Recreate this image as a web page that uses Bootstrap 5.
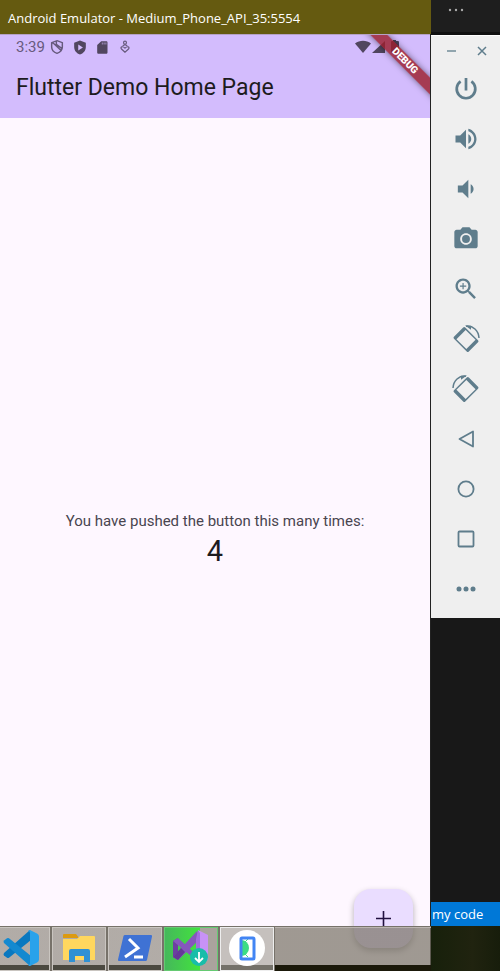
<!DOCTYPE html>
<html lang="en">
<head>
<meta charset="utf-8">
<meta name="viewport" content="width=device-width, initial-scale=1">
<title>Android Emulator</title>
<link href="https://cdn.jsdelivr.net/npm/bootstrap@5.3.0/dist/css/bootstrap.min.css" rel="stylesheet">
<style>
body { background: #181818; font-family: Roboto, "Open Sans", sans-serif; }
svg { display: block; }
.desktop { min-height: 100vh; overflow: hidden; }
.title-strip { height: 34px; background: #655a10; color: #fff; font: 13px "Open Sans", sans-serif; padding-top: 2px; }
.phone { background: #fef7ff; border-right: 1px solid #222; }
.app-top { background: #d3bcfd; height: 84px; border-top: 1px solid #b5a1c5; overflow: hidden; }
.status { height: 24px; font-size: 15px; color: #675a7d; padding: 0 30px 0 16px; }
.status svg { fill: #51465f; }
.app-title { font-size: 23px; line-height: 28px; font-weight: 400; color: #1d1b20; margin-top: 15px; }
.ribbon { top: 20px; right: -25px; width: 100px; height: 12px; transform: rotate(45deg); background: rgba(155, 30, 45, .82); color: #fff; font-size: 10px; line-height: 12px; font-weight: 900; box-shadow: 0 0 6px rgba(0, 0, 0, .5); }
.push-label { font-size: 15px; line-height: 20px; color: #49454f; }
.push-count { font-size: 29px; line-height: 40px; color: #1d1b20; }
.counter { padding-bottom: 8px; }
.fab { right: 17px; bottom: 23px; width: 59px; height: 59px; border: 0; border-radius: 17px; background: #eaddff; box-shadow: 0 3px 6px rgba(0, 0, 0, .3); }
.side { width: 69px; }
.side-top { height: 35px; background: #1e1e1e; border-bottom: 3px solid #101010; }
.tools { background: #efefef; border-top: 1px solid #fff; padding-bottom: 4px; color: #5f7d8c; }
.tools button { border: 0; background: none; padding: 0; color: inherit; }
.tool-btn { height: 50px; }
.win-row { height: 30px; margin-bottom: -2px; padding: 0 13px 0 16px; }
.blue-strip { height: 24px; background: #0078d7; color: #fff; font: 13px "Open Sans", sans-serif; padding-left: 1px; }
.ground { height: 45px; background: linear-gradient(90deg, #17200b, #20230f 60%, #171d0b); }
.taskbar { height: 45px; border-top: 1px solid #77726a; background: linear-gradient(rgba(119, 113, 100, .7) 38px, #1b190a 38px); box-shadow: inset 0 1px #bbb5b0; }
.task-list { gap: 2px; }
.task { width: 54px; height: 44px; padding: 0 0 2px; border: 1px solid #c9c5c0; background: linear-gradient(rgba(205, 200, 198, .4) 37px, #4b4940 37px); box-shadow: 0 0 0 1px #77726a; }
.task:first-child { width: 51px; margin-left: -1px; padding-right: 8px; }
.task.vs { border-color: #65ca72; background: linear-gradient(90deg, #45b85b, #42e43d 68%, transparent 68%), #aaa39d; }
.task.on { border-color: #eee; background: linear-gradient(#c5c0bd 37px, #747169 37px); }
</style>
<script src="https://cdn.jsdelivr.net/npm/bootstrap@5.3.0/dist/js/bootstrap.bundle.min.js"></script>
</head>
<body>
<div class="desktop d-flex position-relative">
  <main class="d-flex flex-column flex-grow-1">
    <header class="title-strip d-flex align-items-center px-2 text-nowrap">Android Emulator - Medium_Phone_API_35:5554</header>
    <section class="phone d-flex flex-column flex-grow-1 position-relative">
      <div class="app-top position-relative">
        <div class="status d-flex align-items-center">
          <span>3:39</span>
          <svg class="ms-1" width="16" height="16" viewBox="0 0 24 24" style="fill:none" stroke="#675a7d" stroke-width="2.2"><path d="M12 2.500 20 5.500V12c0 4.500-3.500 8-8 9.500C7.500 20 4 16.500 4 12V5.500zM5 5l14 13M11 3v5l8 6"/></svg>
          <svg class="ms-2" width="14" height="15" viewBox="0 0 24 24"><path fill-rule="evenodd" d="M12 0 22 4V11c0 6-4.200 11-10 13C6.200 22 2 17 2 11V4zM9 7v10l8-5z"/></svg>
          <svg class="ms-2" width="15" height="15" viewBox="0 0 24 24"><path fill-rule="evenodd" d="M18 2h-8L3.500 8v12c0 1.100.9 2 2 2H18c1.100 0 2-.9 2-2V4c0-1.100-.9-2-2-2zm-6 5h-1V4h1zm3 0h-1V4h1zm3 0h-1V4h1z"/></svg>
          <svg class="ms-2" width="14" height="14" viewBox="0 0 24 24" style="fill:none" stroke="#675a7d" stroke-width="2"><circle cx="12" cy="4.500" r="2.500"/><path d="M12 21 6 15.500C3 12 8 9.500 12 14c4-4.500 9-2 6 1.500zM8 10l4-2 4 2"/></svg>
          <svg class="ms-auto" width="16" height="14" viewBox="0 0 16 14"><path d="M0 3.500C4.500-.2 11.500-.2 16 3.500L8 13z"/></svg>
          <svg class="ms-0" width="15" height="14" viewBox="0 0 15 14"><path d="M14 1v12H1z"/></svg>
          <svg class="ms-1" width="10" height="14" viewBox="0 0 10 14"><path d="M3 0h3v1h2q1 0 1 1v10q0 1-1 1H2q-1 0-1-1V2q0-1 1-1h1z"/></svg>
        </div>
        <h1 class="app-title mb-0 px-3 text-nowrap">Flutter Demo Home Page</h1>
        <span class="ribbon position-absolute text-center">DEBUG</span>
      </div>
      <div class="counter flex-grow-1 d-flex flex-column align-items-center justify-content-center">
        <p class="push-label mb-0">You have pushed the button this many times:</p>
        <output class="push-count">4</output>
      </div>
      <button class="fab position-absolute d-flex align-items-center justify-content-center p-0" type="button" aria-label="Increment">
        <svg width="15" height="15" viewBox="0 0 15 15" stroke="#21103f" stroke-width="1.600"><path d="M7.500 0v15M0 7.500h15"/></svg>
      </button>
    </section>
  </main>

  <aside class="side d-flex flex-column flex-shrink-0">
    <div class="side-top ps-3 pt-2"><svg width="17" height="4" viewBox="0 0 17 4" fill="#aaa"><circle cx="3" cy="2" r="1.200"/><circle cx="9" cy="2" r="1.200"/><circle cx="15" cy="2" r="1.200"/></svg></div>
    <div class="tools d-flex flex-column">
      <div class="win-row d-flex align-items-center justify-content-between">
        <button type="button" aria-label="Minimize"><svg width="9" height="10" viewBox="0 0 9 10" stroke="currentColor" stroke-width="1.300"><path d="M0 5h9"/></svg></button>
        <button type="button" aria-label="Close"><svg width="10" height="10" viewBox="0 0 10 10" stroke="currentColor" stroke-width="1.500"><path d="M1 1l8 8M9 1 1 9"/></svg></button>
      </div>
      <button class="tool-btn d-flex align-items-center justify-content-center" type="button" aria-label="Power"><svg width="28" height="28" viewBox="0 0 28 28" fill="none" stroke="currentColor" stroke-width="2.700"><path d="M14 3v12.500M8.600 6.400a9.300 9.300 0 1 0 10.800 0"/></svg></button>
      <button class="tool-btn d-flex align-items-center justify-content-center" type="button" aria-label="Volume up"><svg width="28" height="28" viewBox="0 0 24 24" fill="currentColor"><path d="M3 9v6h4l5 5V4L7 9H3zm13.500 3c0-1.770-1.020-3.290-2.500-4.030v8.050c1.480-.73 2.500-2.250 2.500-4.020zM14 3.230v2.060c2.890.86 5 3.540 5 6.710s-2.110 5.850-5 6.710v2.060c4.010-.91 7-4.490 7-8.770s-2.990-7.860-7-8.770z"/></svg></button>
      <button class="tool-btn d-flex align-items-center justify-content-center" type="button" aria-label="Volume down"><svg width="28" height="28" viewBox="0 0 24 24" fill="currentColor"><path d="M18.500 12c0-1.770-1.020-3.290-2.500-4.030v8.050c1.480-.73 2.500-2.250 2.500-4.020zM5 9v6h4l5 5V4L9 9H5z"/></svg></button>
      <button class="tool-btn d-flex align-items-center justify-content-center" type="button" aria-label="Screenshot"><svg width="28" height="28" viewBox="0 0 24 24" fill="currentColor"><circle cx="12" cy="12" r="3.400"/><path d="M9 2 7.170 4H4c-1.100 0-2 .9-2 2v12c0 1.100.9 2 2 2h16c1.100 0 2-.9 2-2V6c0-1.100-.9-2-2-2h-3.170L15 2H9zm3 15c-2.760 0-5-2.240-5-5s2.240-5 5-5 5 2.240 5 5-2.240 5-5 5z"/></svg></button>
      <button class="tool-btn d-flex align-items-center justify-content-center" type="button" aria-label="Zoom"><svg width="28" height="28" viewBox="0 0 24 24" fill="currentColor"><path d="M15.500 14h-.79l-.28-.27C15.410 12.590 16 11.110 16 9.500 16 5.910 13.090 3 9.500 3S3 5.910 3 9.500 5.910 16 9.500 16c1.610 0 3.090-.59 4.230-1.570l.27.28v.79l5 4.990L20.490 19l-4.990-5zm-6 0C7.010 14 5 11.990 5 9.500S7.010 5 9.500 5 14 7.010 14 9.500 11.990 14 9.500 14zm2.700-4h-2.200v2.200H9V10H6.800V9H9V6.800h1V9h2.200z"/></svg></button>
      <button class="tool-btn d-flex align-items-center justify-content-center" type="button" aria-label="Rotate left"><svg width="28" height="28" viewBox="0 0 28 28"><g id="rot"><path fill="currentColor" fill-rule="evenodd" transform="translate(14 14.500) rotate(45)" d="M-9-8H9q1.500 0 1.500 1.500v13Q10.500 8 9 8H-9q-1.500 0-1.500-1.500v-13Q-10.500-8-9-8zM-7-6.500v13H7v-13z"/><path fill="none" stroke="currentColor" stroke-width="1.500" d="M14 1.200c7-.8 12.600 4.300 13 11.800"/><path fill="currentColor" d="M13 .5l6 .3v4z"/></g></svg></button>
      <button class="tool-btn d-flex align-items-center justify-content-center" type="button" aria-label="Rotate right"><svg width="28" height="28" viewBox="0 0 28 28"><use href="#rot" transform="matrix(-1 0 0 1 28 0)"/></svg></button>
      <button class="tool-btn d-flex align-items-center justify-content-center" type="button" aria-label="Back"><svg width="28" height="28" viewBox="0 0 28 28" fill="none" stroke="currentColor" stroke-width="1.800" stroke-linejoin="round"><path d="M21 6.500v15L7.500 14z"/></svg></button>
      <button class="tool-btn d-flex align-items-center justify-content-center" type="button" aria-label="Home"><svg width="28" height="28" viewBox="0 0 28 28" fill="none" stroke="currentColor" stroke-width="1.800"><circle cx="14" cy="14" r="7.600"/></svg></button>
      <button class="tool-btn d-flex align-items-center justify-content-center" type="button" aria-label="Overview"><svg width="28" height="28" viewBox="0 0 28 28" fill="none" stroke="currentColor" stroke-width="1.800"><rect x="6.500" y="6.500" width="15" height="15" rx="1"/></svg></button>
      <button class="tool-btn d-flex align-items-center justify-content-center" type="button" aria-label="More"><svg width="28" height="28" viewBox="0 0 28 28" fill="currentColor"><circle cx="7" cy="14" r="2.500"/><circle cx="14" cy="14" r="2.500"/><circle cx="21" cy="14" r="2.500"/></svg></button>
    </div>
    <div class="flex-grow-1"></div>
    <div class="blue-strip d-flex align-items-center text-nowrap">my code</div>
    <div class="ground"></div>
  </aside>

  <div class="position-absolute bottom-0 start-0 w-100 d-flex pe-none">
    <nav class="taskbar flex-grow-1 pe-auto" aria-label="Taskbar">
      <div class="task-list d-flex">
        <button class="task d-flex align-items-center justify-content-center" type="button" aria-label="Visual Studio Code"><svg width="38" height="38" viewBox="0 0 38 38"><path fill="#0878c0" d="M28 1 2 24q-1 1.500 0 2.500l3 2.200q1 .5 2 0L29 11z"/><path fill="#1489d0" d="M28 37 2 14q-1-1.500 0-2.500l3-2.200q1-.5 2 0L29 27z"/><path fill="#29a2eb" d="m28 1 7 3.500q2 1 2 3v23q0 2-2 3L28 37q-1 0-2-1 2 0 2-2V4q0-2-2-2 1-1 2-1z"/></svg></button>
        <button class="task d-flex align-items-center justify-content-center" type="button" aria-label="File Explorer"><svg width="34" height="30" viewBox="0 0 34 30"><path fill="#dc9a10" d="M1 2q0-1 1-1h12l3 4H1z"/><path fill="#ffd75e" d="M1 6h14l3-3h14q1 0 1 1v23H1z"/><path fill="#2f91d4" d="M7 29V18q0-2 2-2h17q2 0 2 2v11h-6v-6h-9v6z"/></svg></button>
        <button class="task d-flex align-items-center justify-content-center" type="button" aria-label="PowerShell"><svg width="36" height="28" viewBox="0 0 36 28"><path fill="#3f72d4" d="M8 1h26q1.500 0 1 1.500L30 26q-.3 1-1.500 1H2Q.7 27 1 25.500L6.500 2q.3-1 1.500-1z"/><path fill="none" stroke="#fff" stroke-width="3" d="m12 5 9 9-13 9M17 23h9"/></svg></button>
        <button class="task vs d-flex align-items-center justify-content-center" type="button" aria-label="Visual Studio Installer"><svg width="40" height="38" viewBox="0 0 40 38"><path fill="#6c3fa0" d="m2 12 5-3v22l-5-3z"/><path fill="#8656bd" d="m7 9 22 20-3 3L2 12zM7 31 2 28 26 2l3 8z"/><path fill="#653897" d="m7 31-5-3 8-9 4 4z"/><path fill="#c892f6" d="m27 1 10 5v25l-8 4z"/><path fill="#a36be0" d="m27 1 2 3v31l-4-4V10z"/><circle cx="28" cy="28" r="9" fill="#18bda9"/><path fill="none" stroke="#fff" stroke-width="1.800" d="M28 23v10m-4-4 4 4 4-4"/></svg></button>
        <button class="task on d-flex align-items-center justify-content-center" type="button" aria-label="Android Emulator"><svg width="36" height="36" viewBox="0 0 36 36"><circle cx="18" cy="18" r="18" fill="#fff"/><path fill="#3ddc84" d="M12 10a8 8 0 0 1 0 16z"/><path stroke="#3ddc84" d="m16 12 3-3m-3 15 3 3"/><rect x="12" y="8" width="13" height="21" rx="1" fill="none" stroke="#4285f4" stroke-width="3"/></svg></button>
      </div>
    </nav>
    <div class="side flex-shrink-0"></div>
  </div>
</div>
</body>
</html>
